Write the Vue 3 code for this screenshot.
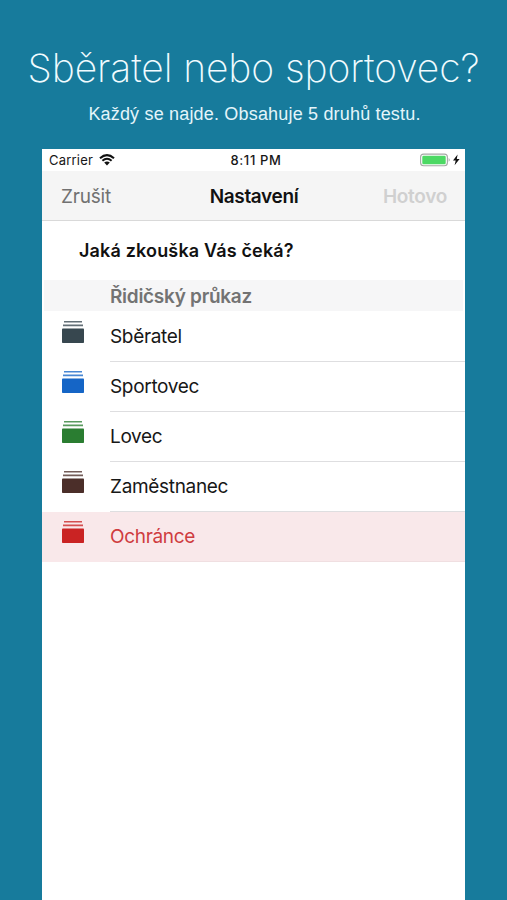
<script setup>
const rows = [
  { name: 'Sběratel', color: '#37474f' },
  { name: 'Sportovec', color: '#1565c6' },
  { name: 'Lovec', color: '#2a7d31' },
  { name: 'Zaměstnanec', color: '#4b2e29' },
  { name: 'Ochránce', color: '#ca2323', selected: true },
]
</script>

<template>
  <main class="page">
    <h1 class="title"><span>Sběratel nebo sportovec?</span></h1>
    <p class="subtitle"><span>Každý se najde. Obsahuje 5 druhů testu.</span></p>
    <section class="phone">
      <div class="status">
        <div class="carrier">
          <span>Carrier</span>
          <svg class="wifi" viewBox="0 0 16 12" width="16" height="12">
            <path d="M1 4.2Q8-2 15 4.2" fill="none" stroke="#111" stroke-width="2.1" />
            <path d="M3.4 6.7Q8 2.7 12.6 6.7" fill="none" stroke="#111" stroke-width="2" />
            <path d="M5.2 8.6Q8 6.2 10.8 8.6L8 11.5Z" fill="#111" />
          </svg>
        </div>
        <span class="time">8:11 PM</span>
        <div class="power">
          <svg viewBox="0 0 40 14" width="40" height="14">
            <rect x=".6" y="1.1" width="26.8" height="11.6" rx="3" fill="#fff" stroke="#a5a8a5" stroke-width="1.1" />
            <rect x="2.3" y="2.8" width="23.4" height="8.4" rx="1.2" fill="#4cd964" />
            <path d="M28.7 5q2 1.9 0 3.8z" fill="#999" />
            <path d="M37.6 1.4L33 7.6H35.7L34.6 12.2L39.6 5.9H36.8Z" fill="#111" />
          </svg>
        </div>
      </div>
      <nav class="nav">
        <span class="cancel">Zrušit</span>
        <strong class="heading">Nastavení</strong>
        <span class="done">Hotovo</span>
      </nav>
      <h2 class="question"><span>Jaká zkouška Vás čeká?</span></h2>
      <h3 class="group"><span>Řidičský průkaz</span></h3>
      <ul class="list">
        <li v-for="r in rows" :key="r.name" class="row" :class="{ selected: r.selected }">
          <svg class="icon" viewBox="0 0 22 22" width="22" height="22" :style="{ color: r.color }">
            <path d="M2 0H20V1.4H2ZM1 3.6H21V5.2H1Z" fill="currentColor" opacity=".78" />
            <rect x="0" y="7.6" width="22" height="14.4" rx=".8" fill="currentColor" />
          </svg>
          <div class="label"><span>{{ r.name }}</span></div>
        </li>
      </ul>
    </section>
  </main>
</template>

<style>
body { margin: 0; background: #177b9c; }
</style>

<style scoped>
.page {
  box-sizing: border-box;
  height: 900px;
  padding: 43px 42px 0;
  overflow: hidden;
  background: #177b9c;
  font-family: Inter, "Liberation Sans", sans-serif;
  display: flex;
  flex-direction: column;
}
h1, h2, h3, p, ul { margin: 0; padding: 0; }
.title {
  height: 50px;
  margin: 0 -42px;
  line-height: 49px;
  text-align: center;
  white-space: nowrap;
  color: #f1fbff;
  font-size: 39px;
  font-weight: 250;
  letter-spacing: -0.1px;
}
.subtitle {
  height: 56px;
  margin: 0 -10px 0 -8px;
  line-height: 42px;
  text-align: center;
  white-space: nowrap;
  color: #e4f5fa;
  font-family: "Liberation Sans", sans-serif;
  font-size: 18px;
  letter-spacing: 0.18px;
}
.phone {
  flex: 1;
  width: 423px;
  background: #fff;
  color: #171717;
}
.status {
  display: grid;
  grid-template-columns: 1fr auto 1fr;
  align-items: center;
  height: 22px;
  padding: 0 5px 0 7px;
  font-size: 13px;
}
.carrier { display: flex; align-items: center; gap: 6px; letter-spacing: 0.2px; }
.time { font-weight: 550; padding-left: 3px; letter-spacing: 0.65px; }
.power { display: flex; justify-content: flex-end; }
.nav {
  box-sizing: border-box;
  height: 50px;
  display: grid;
  grid-template-columns: 1fr auto 1fr;
  align-items: center;
  padding: 1px 18px 0 19px;
  border-bottom: 1px solid #d9d9d9;
  background: #f5f5f5;
  font-size: 19px;
}
.cancel { color: #717171; letter-spacing: -0.2px; }
.heading { font-weight: 600; color: #111; letter-spacing: -0.35px; }
.done { justify-self: end; font-weight: 600; color: #d0d0d0; letter-spacing: -0.3px; }
.question {
  height: 59px;
  padding-left: 37px;
  line-height: 59px;
  font-size: 18px;
  font-weight: 600;
  letter-spacing: 0.16px;
  color: #111;
}
.group {
  height: 31px;
  margin: 0 2px;
  padding-left: 66px;
  background: #f6f6f7;
  line-height: 33px;
  font-size: 19px;
  font-weight: 600;
  letter-spacing: -0.28px;
  color: #737373;
}
.list { list-style: none; padding-top: 1px; }
.row {
  display: flex;
  height: 50px;
  padding-left: 20px;
}
.icon { flex: none; margin: 9px 26px 0 0; }
.label {
  box-sizing: border-box;
  flex: 1;
  height: 50px;
  border-bottom: 1px solid #dedee0;
  line-height: 50px;
  font-size: 19px;
  letter-spacing: -0.32px;
}
.selected { background: #f9e8ea; color: #cf3c40; }
.selected .label { border-color: #f0dfe1; }
</style>
